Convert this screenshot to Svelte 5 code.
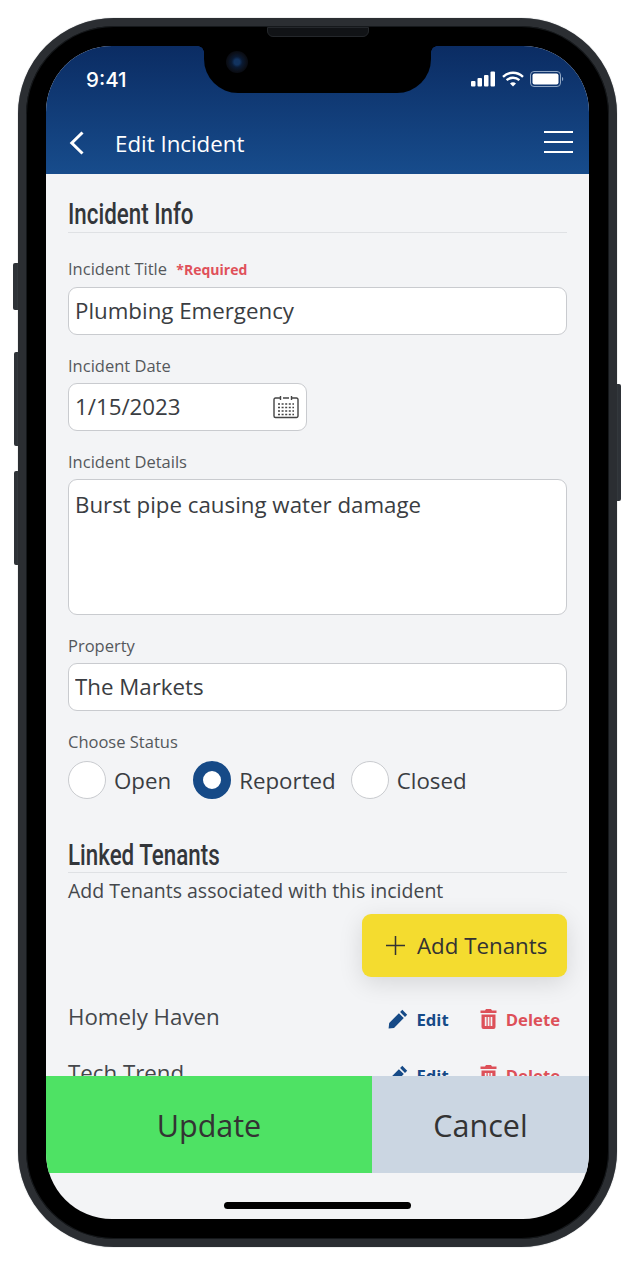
<script lang="ts">
  const statuses = [
    { label: 'Open', checked: false },
    { label: 'Reported', checked: true },
    { label: 'Closed', checked: false },
  ];
  const tenants = ['Homely Haven', 'Tech Trend'];
</script>

<div class="page">
  <div class="phone">
    <span class="side-btn mute"></span>
    <span class="side-btn vol-up"></span>
    <span class="side-btn vol-down"></span>
    <span class="side-btn power"></span>

    <div class="bezel">
      <div class="speaker"></div>
      <div class="screen">
        <div class="notch"><span class="camera"></span></div>

        <header class="appbar">
          <div class="status">
            <span class="time">9:41</span>
            <div class="status-icons">
              <svg width="25" height="16" viewBox="0 0 25 16" fill="#fff">
                <rect x="0" y="10" width="4.5" height="5.5" rx="1" />
                <rect x="6.5" y="7" width="4.5" height="8.5" rx="1" />
                <rect x="13" y="4" width="4.5" height="11.5" rx="1" />
                <rect x="19.5" y="0.5" width="4.5" height="15" rx="1" />
              </svg>
              <svg width="22" height="16" viewBox="0 0 22 16" fill="none" stroke="#fff" stroke-width="2.4">
                <path d="M1 5.8C6.8 .4 15.2 .4 21 5.8" />
                <path d="M4.6 9.2C8.2 6 13.8 6 17.4 9.2" />
                <path d="M8 12.4C9.8 11 12.2 11 14 12.4L11 15.4Z" fill="#fff" stroke="none" />
              </svg>
              <svg width="34" height="16" viewBox="0 0 34 16" fill="none">
                <rect x="0.5" y="0.5" width="30" height="15" rx="3.5" stroke="#8fa6c4" />
                <rect x="2.5" y="2.5" width="26" height="11" rx="2" fill="#fff" />
                <path d="M32 6v4c.8-.3 1.2-1 1.2-2s-.4-1.700-1.200-2z" fill="#8fa6c4" />
              </svg>
            </div>
          </div>
          <div class="titlebar">
            <svg class="back" width="18" height="26" viewBox="0 0 18 26" fill="none" stroke="#fff" stroke-width="3">
              <path d="M15.500 2.500 L4.800 13 L15.500 23.500" />
            </svg>
            <h1>Edit Incident</h1>
            <div class="burger"><span></span><span></span><span></span></div>
          </div>
        </header>

        <main class="content">
          <h2><span>Incident Info</span></h2>

          <div class="field first">
            <div class="label">Incident Title <b>*Required</b></div>
            <input class="input" value="Plumbing Emergency" />
          </div>

          <div class="field">
            <div class="label">Incident Date</div>
            <div class="date-wrap">
              <input class="input" value="1/15/2023" />
              <svg class="cal" width="26" height="24" viewBox="0 0 26 24" fill="none" stroke="#444" stroke-width="1.400">
                <path d="M7 3H2.500a1.500 1.500 0 0 0-1.500 1.500V21a1.500 1.500 0 0 0 1.500 1.500h21A1.500 1.500 0 0 0 25 21V4.500A1.500 1.500 0 0 0 23.500 3H19M10 3h6" />
                <path d="M7.500 1v4M18.500 1v4" />
                <path d="M5 9h16M5 12.500h16M5 16h16M5 19.500h16" stroke-dasharray="2 1.600" stroke-width="1.500" />
              </svg>
            </div>
          </div>

          <div class="field">
            <div class="label">Incident Details</div>
            <textarea class="input area">Burst pipe causing water damage</textarea>
          </div>

          <div class="field">
            <div class="label">Property</div>
            <input class="input" value="The Markets" />
          </div>

          <div class="field">
            <div class="label">Choose Status</div>
            <div class="radios">
              {#each statuses as s}
                <div class="radio-item">
                  <span class="radio" class:checked={s.checked}></span>
                  <span>{s.label}</span>
                </div>
              {/each}
            </div>
          </div>

          <h2 class="linked"><span>Linked Tenants</span></h2>
          <p class="hint">Add Tenants associated with this incident</p>

          <div class="add-row">
            <button class="add">
              <svg width="19" height="19" viewBox="0 0 20 20" stroke="#333" stroke-width="1.600">
                <path d="M10 0v20M0 10h20" />
              </svg>
              Add Tenants
            </button>
          </div>

          <div class="tenants">
            {#each tenants as name}
              <div class="tenant">
                <span class="name">{name}</span>
                <span class="act edit">
                  <svg width="20" height="20" viewBox="0 0 20 20" fill="#164a87">
                    <path d="M14.300 .8 19.200 5.700 17 7.900 12.100 3zM10.900 4.200 15.800 9.100 6 18.900 .6 19.500 1.200 14z" />
                  </svg>
                  Edit
                </span>
                <span class="act del">
                  <svg width="17" height="20" viewBox="0 0 17 20" fill="#dd5059">
                    <path d="M6 0h5l1 1.500h4.500V4H.5V1.500H5z" />
                    <path fill-rule="evenodd" d="M1.500 5.500h14V18a2 2 0 0 1-2 2h-10a2 2 0 0 1-2-2zM4.800 8v9h1.700V8zM7.700 8v9h1.700V8zM10.600 8v9h1.700V8z" />
                  </svg>
                  Delete
                </span>
              </div>
            {/each}
          </div>
        </main>

        <div class="actions">
          <button class="update">Update</button>
          <button class="cancel">Cancel</button>
        </div>
        <div class="home"><span></span></div>
      </div>
    </div>
  </div>
</div>

<style>
  :global(body) {
    margin: 0;
    background: #fff;
  }

  .page {
    width: 635px;
    height: 1266px;
    padding: 18px 0 0 18px;
    box-sizing: border-box;
    font-family: "Open Sans", sans-serif;
    color: #3a3d42;
  }

  .phone {
    position: relative;
    width: 599px;
    height: 1229px;
  }

  .side-btn {
    position: absolute;
    background: #2e3237;
    border-radius: 2px 0 0 2px;
    left: -5px;
    width: 6px;
  }
  .mute { top: 245px; height: 47px; }
  .vol-up { top: 334px; height: 94px; left: -4px; }
  .vol-down { top: 453px; height: 94px; left: -4px; }
  .power { top: 366px; height: 117px; left: auto; right: -4px; border-radius: 0 2px 2px 0; }

  .bezel {
    position: relative;
    height: 100%;
    box-sizing: border-box;
    background: #000;
    border: 8px solid #2b2e32;
    border-radius: 96px;
    padding: 20px;
    box-shadow: inset 0 0 0 1px #15181b, 0 0 1px 0 #6b7076;
  }

  .speaker {
    position: absolute;
    top: 1px;
    left: 241px;
    width: 102px;
    height: 10px;
    background: #111316;
    border: 1px solid #24272b;
    border-radius: 0 0 6px 6px;
    box-sizing: border-box;
  }

  .screen {
    position: relative;
    display: flex;
    flex-direction: column;
    height: 100%;
    border-radius: 66px;
    overflow: hidden;
    background: #f3f4f6;
  }

  .notch {
    position: absolute;
    top: 0;
    left: 158px;
    width: 227px;
    height: 47px;
    background: #000;
    border-radius: 0 0 34px 34px;
    z-index: 2;
  }
  .notch::before,
  .notch::after {
    content: "";
    position: absolute;
    top: 0;
    width: 6px;
    height: 6px;
  }
  .notch::before {
    left: -6px;
    background: radial-gradient(circle at 0 100%, transparent 5.500px, #000 6px);
  }
  .notch::after {
    right: -6px;
    background: radial-gradient(circle at 100% 100%, transparent 5.500px, #000 6px);
  }
  .camera {
    position: absolute;
    left: 22px;
    top: 5px;
    width: 22px;
    height: 22px;
    border-radius: 50%;
    background: radial-gradient(circle, #12335f 0 18%, #0a1a33 34%, #0b0f18 60%, #000 100%);
  }

  .appbar {
    flex: none;
    height: 128px;
    background: linear-gradient(#0b2c63, #174c8c);
    color: #fff;
  }
  .status {
    display: flex;
    justify-content: space-between;
    align-items: center;
    height: 66px;
    padding: 0 25px 0 40px;
  }
  .time {
    font-size: 20.500px;
    font-weight: 500;
    font-family: Inter, sans-serif;
  }
  .status-icons {
    display: flex;
    align-items: center;
    gap: 6px;
  }
  .titlebar {
    display: flex;
    align-items: center;
    height: 62px;
    padding: 0 16px 0 21px;
  }
  .back { flex: none; }
  h1 {
    flex: 1;
    margin: 0 0 0 30px;
    font-size: 22.300px;
    font-weight: 400;
  }
  .burger {
    display: flex;
    flex-direction: column;
    gap: 8px;
    width: 29px;
    margin-top: -2px;
  }
  .burger span {
    height: 2px;
    background: #fff;
  }

  .content {
    flex: 1;
    min-height: 0;
    overflow: hidden;
    padding: 22px 22px 0;
  }

  h2 {
    margin: 0;
    height: 36px;
    line-height: 35px;
    font-family: Roboto, "Liberation Sans", sans-serif;
    font-size: 30px;
    font-weight: 500;
    color: #33363a;
    border-bottom: 1px solid #dfe1e4;
    white-space: nowrap;
  }
  h2 span {
    display: inline-block;
    transform: scaleX(0.745);
    transform-origin: left center;
  }
  h2.linked {
    margin-top: 37px;
    line-height: 37px;
  }

  .field {
    margin-top: 20px;
  }
  .field.first {
    margin-top: 25px;
  }
  .first .label {
    margin-bottom: 7px;
  }
  .label {
    height: 22px;
    line-height: 22px;
    font-size: 16.500px;
    color: #55585c;
    margin-bottom: 6px;
  }
  .label b {
    margin-left: 5px;
    font-size: 14px;
    color: #e0505a;
  }

  .input {
    display: block;
    width: 100%;
    height: 48px;
    box-sizing: border-box;
    padding: 0 6px 2px;
    border: 1px solid #c9cbcf;
    border-radius: 9px;
    background: #fff;
    font: 400 22.300px "Open Sans", sans-serif;
    color: #3a3d42;
    outline: none;
  }
  .area {
    height: 136px;
    padding-top: 9px;
    resize: none;
    overflow: hidden;
  }
  .date-wrap {
    position: relative;
    width: 239px;
  }
  .cal {
    position: absolute;
    right: 8px;
    top: 12px;
  }

  .radios {
    display: flex;
    gap: 15px;
    margin-top: 8px;
  }
  .radio-item {
    display: flex;
    align-items: center;
    gap: 8px;
    font-size: 22.300px;
  }
  .radio-item:first-child {
    margin-right: 7px;
  }
  .radio {
    width: 38px;
    height: 38px;
    box-sizing: border-box;
    border: 1px solid #c9cbcf;
    border-radius: 50%;
    background: #fff;
  }
  .radio.checked {
    border: 10px solid #164a87;
  }

  .hint {
    margin: 5px 0 0;
    font-size: 19.500px;
    line-height: 25px;
    color: #44474b;
    white-space: nowrap;
  }

  .add-row {
    display: flex;
    justify-content: flex-end;
    margin-top: 11px;
  }
  .add {
    display: flex;
    align-items: center;
    gap: 12px;
    width: 205px;
    height: 63px;
    padding: 0 0 0 24px;
    border: 0;
    border-radius: 9px;
    background: #f4dc2f;
    box-shadow: 0 6px 24px rgba(0, 0, 0, 0.12);
    font: 400 22.300px "Open Sans", sans-serif;
    color: #333;
  }

  .tenants {
    margin-top: 11px;
  }
  .tenant {
    display: flex;
    align-items: center;
    height: 56px;
  }
  .name {
    flex: 1;
    font-size: 22.300px;
    color: #44474b;
  }
  .act {
    display: flex;
    align-items: center;
    margin-top: 6px;
    font-size: 16.700px;
    font-weight: 700;
  }
  .edit {
    gap: 8px;
    color: #164a87;
    margin-right: 31px;
  }
  .del {
    gap: 9px;
    color: #dd5059;
    margin-right: 7px;
  }

  .actions {
    flex: none;
    display: flex;
    height: 97px;
  }
  .actions button {
    border: 0;
    font: 400 30.500px "Open Sans", sans-serif;
    color: #333;
  }
  .update {
    width: 326px;
    background: #4ee264;
  }
  .cancel {
    flex: 1;
    background: #cbd6e2;
  }

  .home {
    flex: none;
    height: 46px;
    display: flex;
    justify-content: center;
  }
  .home span {
    width: 187px;
    height: 7px;
    margin-top: 29px;
    border-radius: 4px;
    background: #000;
  }
</style>
